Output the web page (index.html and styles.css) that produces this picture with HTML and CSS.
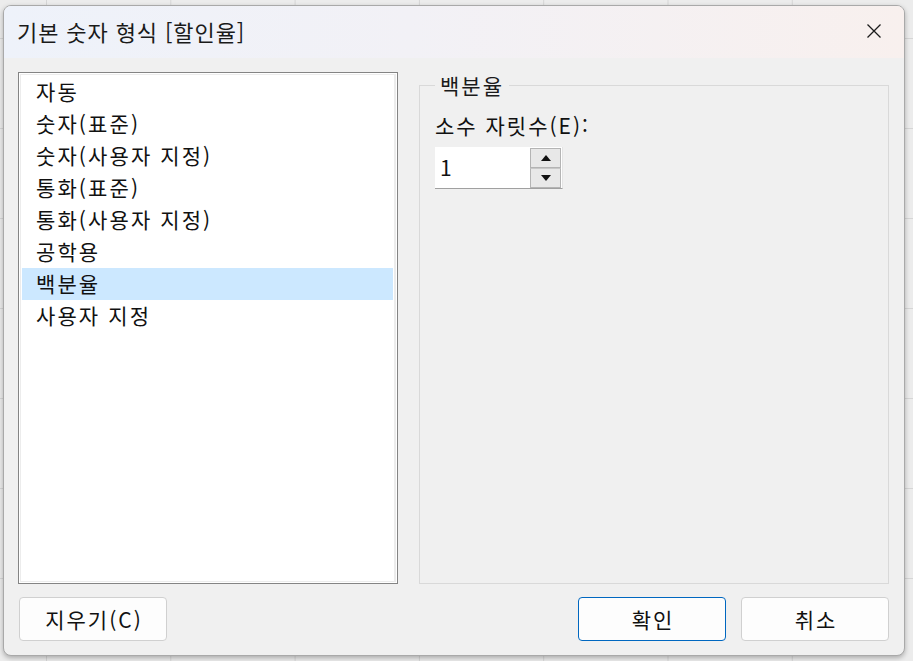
FILE: index.html
```html
<!DOCTYPE html>
<html lang="ko">
<head>
<meta charset="utf-8">
<title>기본 숫자 형식</title>
<link rel="stylesheet" href="styles.css">
</head>
<body>
<div class="window">
  <div class="titlebar">
    <span class="title">기본 숫자 형식 [할인율]</span>
    <button class="close" aria-label="닫기">
      <svg width="16" height="16" viewBox="0 0 16 16"><path d="M1.5 1.5 L14.5 14.5 M14.5 1.5 L1.5 14.5" stroke="#1c1c1c" stroke-width="1.3" fill="none"/></svg>
    </button>
  </div>
  <div class="content">
    <div class="main">
      <div class="listbox">
        <div class="inner">
          <div class="item">자동</div>
          <div class="item">숫자(표준)</div>
          <div class="item">숫자(사용자 지정)</div>
          <div class="item">통화(표준)</div>
          <div class="item">통화(사용자 지정)</div>
          <div class="item">공학용</div>
          <div class="item selected">백분율</div>
          <div class="item">사용자 지정</div>
        </div>
      </div>
      <fieldset class="group">
        <legend>백분율</legend>
        <div class="label">소수 자릿수(E):</div>
        <div class="spin">
          <div class="spin-value">1</div>
          <div class="spin-buttons">
            <div class="spin-btn"><svg width="10" height="6" viewBox="0 0 10 6"><path d="M0 6 L5 0 L10 6 Z" fill="#111"/></svg></div>
            <div class="spin-btn"><svg width="10" height="6" viewBox="0 0 10 6"><path d="M0 0 L10 0 L5 6 Z" fill="#111"/></svg></div>
          </div>
        </div>
      </fieldset>
    </div>
    <div class="buttons">
      <button class="btn">지우기(C)</button>
      <div class="spacer"></div>
      <button class="btn primary">확인</button>
      <button class="btn">취소</button>
    </div>
  </div>
</div>
</body>
</html>
```

FILE: styles.css
```css
html, body {
  margin: 0;
  padding: 0;
}
body {
  width: 913px;
  height: 661px;
  overflow: hidden;
  background-color: #ececec;
  background-image:
    linear-gradient(to right, #d6d6d6 1px, transparent 1px),
    linear-gradient(to bottom, #d6d6d6 1px, transparent 1px);
  background-size: 124.3px 90px, 124.3px 90px;
  background-position: 46px 0, 0 38px;
  font-family: "Noto Sans CJK KR", "Noto Sans", sans-serif;
  color: #1a1a1a;
  padding: 5px 0 0 3px;
  box-sizing: border-box;
}
.window {
  width: 902px;
  height: 651px;
  box-sizing: border-box;
  border: 1px solid #a9a9a9;
  border-radius: 8px;
  background: #f0f0f0;
  box-shadow: 0 2px 5px rgba(0, 0, 0, 0.28);
  overflow: hidden;
  display: flex;
  flex-direction: column;
}
.titlebar {
  height: 52px;
  flex: none;
  display: flex;
  align-items: center;
  justify-content: space-between;
  padding: 0 18px 0 13px;
  background: linear-gradient(to right, #eef2fa 0%, #f2f1f6 45%, #f8f0ee 100%);
}
.title {
  font-size: 22px;
  letter-spacing: 0.9px;
  color: #1a1a1a;
  margin-top: -2px;
}
.close {
  border: 0;
  background: transparent;
  padding: 0;
  width: 24px;
  height: 24px;
  display: flex;
  align-items: center;
  justify-content: center;
  margin-top: -2px;
}
.content {
  flex: 1;
  display: flex;
  flex-direction: column;
  padding: 14px 15px 15px 14px;
}
.main {
  flex: none;
  height: 512px;
  display: flex;
  gap: 21px;
}
.listbox {
  width: 380px;
  flex: none;
  box-sizing: border-box;
  border: 1px solid #848484;
  background: #fff;
  padding: 1px;
}
.inner {
  height: 100%;
  box-sizing: border-box;
  border: 1px solid #ececec;
  border-right-width: 2px;
  padding: 1px 1px;
}
.item {
  height: 32px;
  line-height: 30px;
  padding-left: 14px;
  font-size: 21px;
  letter-spacing: 2.1px;
  color: #111;
  white-space: nowrap;
}
.item.selected {
  background: #cce8ff;
}
.group {
  flex: 1;
  min-width: 0;
  margin: 0;
  border: 1px solid #d9d9d9;
  padding: 0 15px;
}
.group legend {
  padding: 0 5px;
  font-size: 21px;
  line-height: 26px;
  letter-spacing: 2px;
  color: #1a1a1a;
}
.label {
  margin-top: 14px;
  font-size: 21px;
  line-height: 26px;
  letter-spacing: 2px;
  color: #111;
}
.spin {
  margin-top: 9px;
  width: 128px;
  height: 42px;
  box-sizing: border-box;
  background: #fff;
  border-bottom: 1px solid #a0a0a0;
  border-right: 1px solid #e4e4e4;
  display: flex;
  align-items: stretch;
}
.spin-value {
  flex: 1;
  font-size: 21px;
  line-height: 41px;
  padding-left: 5px;
  color: #111;
}
.spin-buttons {
  width: 31px;
  display: flex;
  flex-direction: column;
  padding: 1px 1px 0 0;
}
.spin-btn {
  flex: 1;
  border: 1px solid #b4b4b4;
  background: #e8e8e8;
  display: flex;
  align-items: center;
  justify-content: center;
}
.spin-btn + .spin-btn {
  border-top: 1px solid #c8c8c8;
}
.buttons {
  display: flex;
  gap: 15px;
  margin-top: 13px;
  padding-left: 1px;
}
.spacer {
  flex: 1;
}
.btn {
  width: 148px;
  height: 44px;
  box-sizing: border-box;
  border: 1px solid #d0d0d0;
  border-radius: 4px;
  background: #fdfdfd;
  font-family: "Noto Sans CJK KR", "Noto Sans", sans-serif;
  font-size: 21px;
  color: #111;
  letter-spacing: 2px;
  padding: 0 0 0 2px;
}
.btn.primary {
  border: 1px solid #0067c0;
}
```
